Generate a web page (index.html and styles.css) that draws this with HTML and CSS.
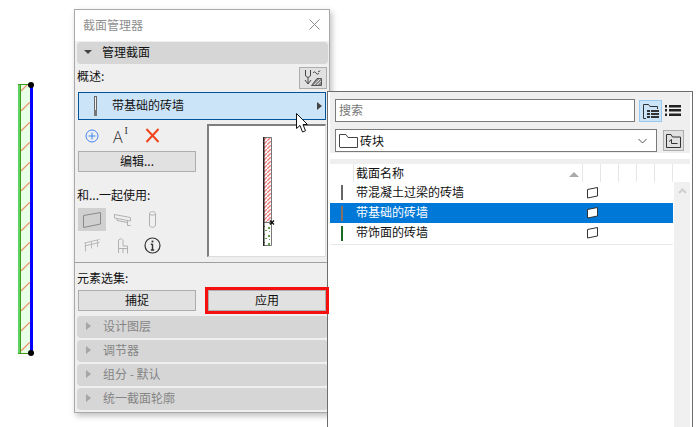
FILE: index.html
```html
<!DOCTYPE html>
<html lang="zh">

<head>
	<meta charset="utf-8">
	<title>截面管理器</title>
	<link rel="stylesheet" href="styles.css">
</head>

<body>
	<!-- wall on the drawing canvas -->
	<svg class="wall" width="20" height="274" viewBox="0 0 20 274">
		<defs>
			<pattern id="wallhatch" width="20" height="20" patternUnits="userSpaceOnUse">
				<path d="M5 9 L14 0" stroke="#ea9468" stroke-width="1.2"/>
			</pattern>
		</defs>
		<rect x="3" y="3" width="11" height="269" fill="#e8ffe8"/>
		<rect x="3" y="3" width="11" height="269" fill="url(#wallhatch)"/>
		<rect x="2" y="2" width="2" height="270" fill="#5fd35f"/>
		<rect x="4" y="2" width="1" height="270" fill="#3f9a1c"/>
		<rect x="2" y="2" width="12" height="1" fill="#3f9a1c"/>
		<rect x="2" y="271" width="12" height="1" fill="#3f9a1c"/>
		<rect x="14" y="2" width="3" height="270" fill="#0000ff"/>
		<circle cx="15" cy="3" r="3" fill="#000"/>
		<circle cx="15" cy="271" r="3" fill="#000"/>
	</svg>

	<div class="dialog">
		<div class="titlebar">
			<span>截面管理器</span>
			<svg width="11" height="11" viewBox="0 0 11 11" stroke="#8a8a8a" fill="none"><path d="M0.5 0.5 L10.5 10.5 M10.5 0.5 L0.5 10.5"/></svg>
		</div>
		<div class="dialog-body">
			<div class="section section-open"><span class="arrow-down"></span>管理截面</div>
			<div class="overview-row">
				<span>概述:</span>
				<button class="small-btn">
					<svg width="20" height="18" viewBox="0 0 20 18" fill="none" stroke="#444">
						<path d="M2.5 1 V6 C2.5 9 7.5 9 7.5 6 V1"/>
						<path d="M2 11 L5 15 L8 11"/>
						<path d="M5 8.5 V14"/>
						<path d="M10 4 C11 2.5 12 2.5 13 4 C14 5.5 15 5.5 16 4"/>
						<path d="M17 1.5 C16.500 3 16 3 15 2"/>
						<path d="M8.500 16.500 L14 9.500 H18.500 V16.500 Z" fill="#8a8a8a" stroke="#555"/>
						<path d="M11 16 L17 10 M14 16 L18 12" stroke="#d8d8d8"/>
					</svg>
				</button>
			</div>
			<div class="profile-picker">
				<svg class="picker-wall" width="4" height="20" viewBox="0 0 4 20">
					<rect x="0.5" y="0.5" width="2" height="19" fill="#eee" stroke="#666"/>
					<rect x="0" y="14" width="3" height="6" fill="#777"/>
				</svg>
				<span class="picker-name">带基础的砖墙</span>
				<span class="arrow-right"></span>
			</div>
			<div class="split">
				<div class="split-left">
					<div class="action-icons">
						<svg width="16" height="16" viewBox="0 0 16 16" fill="none" stroke="#3d85f0"><circle cx="8" cy="8" r="6"/><path d="M4.500 8 H11.500 M8 4.500 V11.500"/></svg>
						<span class="rename"><span class="rename-a">A</span><span class="rename-i">I</span></span>
						<svg width="15" height="15" viewBox="0 0 15 15" stroke="#f0431e" stroke-width="2"><path d="M1.500 1 L13.500 14 M13.500 1 L1.500 14"/></svg>
					</div>
					<button class="btn">编辑...</button>
					<div class="use-label">和...一起使用:</div>
					<div class="use-grid">
						<div class="use-item use-on">
							<svg width="20" height="18" viewBox="0 0 20 18" fill="none" stroke="#8a8a8a"><path d="M1.500 4.500 L18.500 1.500 V13 L1.500 16.500 Z"/></svg>
						</div>
						<div class="use-item">
							<svg width="17" height="12" viewBox="0 0 17 12" fill="none" stroke="#b0b0b0"><path d="M0.500 0.500 L16.500 3.500 V7 L0.500 4 Z M3 5 L3 6.500 L13.500 8.500 M13.500 7 V11.500 H16.500"/></svg>
						</div>
						<div class="use-item">
							<svg width="7" height="17" viewBox="0 0 7 17" fill="none" stroke="#b0b0b0"><path d="M0.500 2.500 C0.500 0 6.500 0 6.500 2.500 V14 C6.500 17 0.500 17 0.500 14 Z M0.500 3 C2 4.500 5 4.500 6.500 3"/></svg>
						</div>
						<div class="use-item">
							<svg width="16" height="13" viewBox="0 0 16 13" fill="none" stroke="#b8b8b8"><path d="M0.500 4 L15.500 0.500 M0.500 7 L15.500 3.500 M1.500 3.500 V12.500 M7.500 2.500 V9.500 M13.500 1 V8"/></svg>
						</div>
						<div class="use-item">
							<svg width="11" height="16" viewBox="0 0 11 16" fill="none" stroke="#b0b0b0"><path d="M1.500 15 V2 L4 0.500 L6 2.500 V8 H10.500 V15.500 M1.500 10.500 H10.500 M6 10.500 V15"/></svg>
						</div>
						<div class="use-item">
							<svg width="17" height="17" viewBox="0 0 17 17" fill="none" stroke="#333" stroke-width="1.2">
								<circle cx="8.500" cy="8.500" r="7.500"/>
								<path d="M8.500 7 V13 M6.800 7.200 H8.500 M6.800 13 H10.200" stroke-width="1.400"/>
								<rect x="7.600" y="3.600" width="1.800" height="1.800" fill="#333" stroke="none"/>
							</svg>
						</div>
					</div>
				</div>
				<div class="preview">
					<svg width="12" height="109" viewBox="0 0 12 109">
						<defs>
							<pattern id="brick" width="4" height="4" patternUnits="userSpaceOnUse">
								<rect width="4" height="4" fill="#fff"/>
								<path d="M0 4 L4 0" stroke="#ee7f7f" stroke-width="1.400"/>
							</pattern>
							<pattern id="gravel" width="8" height="8" patternUnits="userSpaceOnUse">
								<rect width="8" height="8" fill="#fff"/>
								<rect x="1" y="1" width="1" height="1" fill="#5da043"/>
								<rect x="5" y="2" width="2" height="2" fill="#5da043"/>
								<rect x="2" y="5" width="2" height="1" fill="#5da043"/>
								<rect x="6" y="6" width="1" height="1" fill="#7a9a7a"/>
							</pattern>
						</defs>
						<rect x="1" y="0.500" width="8" height="85" fill="url(#brick)"/>
						<rect x="1" y="85.500" width="8" height="23" fill="url(#gravel)"/>
						<path d="M1 0.500 H8.500 V108.500 H1 M1 85.500 H8.500" fill="none" stroke="#777"/>
						<rect x="0" y="0" width="1.500" height="109" fill="#222"/>
						<path d="M7 83.500 L11 87.500 M11 83.500 L7 87.500" stroke="#000" stroke-width="1.200"/>
					</svg>
				</div>
			</div>
			<div class="element-set">
				<div class="set-label">元素选集:</div>
				<div class="set-buttons">
					<button class="btn">捕捉</button>
					<span class="apply-ring"><button class="btn">应用</button></span>
				</div>
			</div>
			<div class="section"><span class="arrow-side"></span>设计图层</div>
			<div class="section"><span class="arrow-side"></span>调节器</div>
			<div class="section"><span class="arrow-side"></span>组分 - 默认</div>
			<div class="section"><span class="arrow-side"></span>统一截面轮廓</div>
		</div>
	</div>

	<div class="browser">
		<div class="toolbar">
			<div class="tool-row">
				<div class="search">搜索</div>
				<button class="toggle">
					<svg width="16" height="16" viewBox="0 0 16 16" fill="none" stroke="#333">
						<path d="M0.500 15.500 V1.500 H5.500 L7 3.500 H14.500 V6"/>
						<path d="M0.500 15.500 H3"/>
						<path d="M4 8 H16 M4 11 H16 M4 14 H16" stroke-width="2" stroke-dasharray="3 1 8"/>
					</svg>
				</button>
				<svg class="list-icon" width="16" height="11" viewBox="0 0 16 11" fill="#222">
					<rect x="0" y="0" width="2" height="2.500"/>
					<rect x="4" y="0" width="12" height="2.500"/>
					<rect x="0" y="4" width="2" height="2.500"/>
					<rect x="4" y="4" width="12" height="2.500"/>
					<rect x="0" y="8.500" width="2" height="2.500"/>
					<rect x="4" y="8.500" width="12" height="2.500"/>
				</svg>
			</div>
			<div class="tool-row">
				<div class="folder-select">
					<svg width="20" height="15" viewBox="0 0 20 15" fill="#fff" stroke="#444">
						<path d="M0.500 14 V1.500 H7 L9 4.500 H18.500 V14.500 H1 Z"/>
					</svg>
					<span class="folder-name">砖块</span>
					<svg class="chevron" width="9" height="6" viewBox="0 0 9 6" fill="none" stroke="#555">
						<path d="M0.500 1 L4.500 5 L8.500 1"/>
					</svg>
				</div>
				<button class="up-btn">
					<svg width="15" height="14" viewBox="0 0 15 14" fill="none" stroke="#333">
						<path d="M0.500 13.500 V0.500 H5 L6.500 3 H14.500 V13.500 Z"/>
						<path d="M3 7.500 L5.500 5.500 V9.500 H11.500"/>
					</svg>
				</button>
			</div>
		</div>
		<div class="band"></div>
		<div class="table-wrap">
			<div class="table">
				<div class="thead">
					<div class="th-blank"></div>
					<div class="th-name">截面名称<span class="sort"></span></div>
					<div class="th-col"></div>
					<div class="th-col"></div>
					<div class="th-col"></div>
					<div class="th-col"></div>
					<div class="th-col"></div>
				</div>
				<div class="trow">
					<span class="swatch swatch-grey"></span>
					<span class="trow-name">带混凝土过梁的砖墙</span>
					<svg width="13" height="12" viewBox="0 0 13 12" fill="#fff" stroke="#333"><path d="M1.500 2.500 L11.500 0.500 V9 L1.500 11 Z"/></svg>
				</div>
				<div class="trow trow-sel">
					<span class="swatch swatch-brown"></span>
					<span class="trow-name">带基础的砖墙</span>
					<svg width="13" height="12" viewBox="0 0 13 12" fill="#fff" stroke="#333"><path d="M1.500 2.500 L11.500 0.500 V9 L1.500 11 Z"/></svg>
				</div>
				<div class="trow trow-last">
					<span class="swatch swatch-green"></span>
					<span class="trow-name">带饰面的砖墙</span>
					<svg width="13" height="12" viewBox="0 0 13 12" fill="#fff" stroke="#333"><path d="M1.500 2.500 L11.500 0.500 V9 L1.500 11 Z"/></svg>
				</div>
			</div>
			<div class="scrollbar">
				<svg width="9" height="6" viewBox="0 0 9 6" fill="none" stroke="#cfcfcf" stroke-width="2"><path d="M1 5 L4.500 1.500 L8 5"/></svg>
			</div>
		</div>
	</div>

	<!-- mouse pointer, on top of everything -->
	<svg class="pointer" width="14" height="21" viewBox="0 0 14 21">
		<path d="M0.500 0.500 V15.500 L4 12.500 L6.500 19 L9.500 17.800 L7 11.500 H11.500 Z" fill="#fff" stroke="#111"/>
	</svg>
</body>

</html>
```

FILE: styles.css
```css
* {
	box-sizing: border-box;
}

body {
	margin: 0;
	width: 699px;
	height: 427px;
	overflow: hidden;
	position: relative;
	background-color: #fff;
	color: #111;
	font-family: "Noto Sans CJK SC", "Liberation Sans", sans-serif;
	font-size: 12px;
	line-height: 16px;
}

button {
	font: inherit;
	color: inherit;
	padding: 0;
}

.wall {
	position: absolute;
	left: 16px;
	top: 82px;
}

.pointer {
	position: absolute;
	left: 296px;
	top: 113px;
}

/* floating dialog */
.dialog {
	position: absolute;
	left: 74px;
	top: 9px;
	width: 256px;
	height: 404px;
	background-color: #efefef;
	border: 1px solid #a9a9a9;
	box-shadow: 2px 3px 6px rgba(0, 0, 0, 0.25);
	display: flex;
	flex-direction: column;
}

.titlebar {
	height: 31px;
	flex: none;
	background-color: #fff;
	color: #8f8f8f;
	display: flex;
	align-items: center;
	justify-content: space-between;
	padding: 0 9px 2px 8px;
}

.dialog-body {
	padding: 1px 1px 0 2px;
	display: flex;
	flex-direction: column;
}

.section {
	height: 22px;
	flex: none;
	margin-bottom: 2px;
	background-color: #d6d6d6;
	border-radius: 4px;
	color: #858585;
	display: flex;
	align-items: center;
	padding: 0 0 2px 9px;
}

.section-open {
	color: #111;
	padding-left: 7px;
}

.arrow-down {
	width: 0;
	height: 0;
	margin-right: 10px;
	border-left: 4px solid transparent;
	border-right: 4px solid transparent;
	border-top: 4px solid #444;
}

.arrow-side {
	width: 0;
	height: 0;
	margin-right: 12px;
	border-top: 4px solid transparent;
	border-bottom: 4px solid transparent;
	border-left: 5px solid #a5a5a5;
}

.overview-row {
	height: 23px;
	display: flex;
	align-items: flex-end;
	justify-content: space-between;
	padding-right: 1px;
}

.overview-row span {
	margin-bottom: 5px;
}

.small-btn {
	width: 28px;
	height: 22px;
	background-color: #e1e1e1;
	border: 1px solid #adadad;
	display: flex;
	align-items: center;
	justify-content: center;
}

.profile-picker {
	height: 28px;
	margin: 3px 0 0 1px;
	width: 248px;
	background-color: #cce4f7;
	border: 1px solid #005499;
	display: flex;
	align-items: center;
	padding-left: 15px;
}

.picker-name {
	margin: 0 0 2px 14px;
	flex: 1;
}

.arrow-right {
	width: 0;
	height: 0;
	margin-right: 3px;
	border-top: 4px solid transparent;
	border-bottom: 4px solid transparent;
	border-left: 5px solid #444;
}

.split {
	display: flex;
	justify-content: space-between;
	margin: 4px 0 0 -2px;
	width: 254px;
	height: 139px;
	border-bottom: 1px solid #a0a0a0;
	padding: 0 3px 0 3px;
}

.split-left {
	width: 118px;
}

.action-icons {
	height: 27px;
	display: flex;
	align-items: center;
	padding: 0 0 4px 6px;
}

.rename {
	margin-left: 13px;
	width: 32px;
	display: flex;
	align-items: flex-start;
	color: #333;
}

.rename-a {
	font-family: "Open Sans", sans-serif;
	font-weight: 300;
	font-size: 16px;
	line-height: 17px;
	padding-top: 3px;
}

.rename-i {
	font-family: "Liberation Serif", serif;
	font-size: 10px;
	line-height: 10px;
	margin-left: 2px;
}

.btn {
	height: 21px;
	width: 118px;
	background-color: #e1e1e1;
	border: 1px solid #adadad;
	display: block;
	text-align: center;
	padding-bottom: 2px;
}

.use-label {
	margin: 15px 0 0 -1px;
	height: 16px;
}

.use-grid {
	margin-top: 5px;
	display: grid;
	grid-template-columns: 28px 28px 28px;
	grid-auto-rows: 23px;
	gap: 3px 2px;
}

.use-item {
	display: flex;
	align-items: center;
	justify-content: center;
}

.use-on {
	background-color: #d0d0d0;
}

.preview {
	width: 119px;
	height: 133px;
	background-color: #fff;
	border-style: solid;
	border-width: 2px 1px 1px 2px;
	border-color: #7f7f7f #dcdcdc #dcdcdc #7f7f7f;
	display: flex;
	padding: 11px 0 0 54px;
}

.element-set {
	padding: 7px 0 0 0;
}

.set-label {
	height: 16px;
}

.set-buttons {
	margin: 4px 0 5px 1px;
	width: 248px;
	display: flex;
	justify-content: space-between;
}

/* the red mark sits above the browser panel as well */
.apply-ring {
	display: block;
	position: relative;
	z-index: 1;
	outline: 3px solid #f51010;
	width: 118px;
}

/* profile browser next to the dialog */
.browser {
	position: absolute;
	left: 327px;
	top: 91px;
	width: 366px;
	height: 340px;
	background-color: #fff;
	border: 1px solid #6d6d6d;
	padding: 0 2px;
}

.toolbar {
	height: 61px;
	background-color: #efefef;
	padding: 7px 5px 0 5px;
}

.tool-row {
	display: flex;
	align-items: center;
	margin-bottom: 7px;
}

.search {
	width: 300px;
	height: 23px;
	background-color: #fff;
	border: 1px solid #7a7a7a;
	color: #777;
	padding: 2px 3px;
}

.toggle {
	width: 23px;
	height: 22px;
	margin-left: 4px;
	background-color: #cce4f7;
	border: 1px solid #99c9ef;
	display: flex;
	align-items: center;
	justify-content: center;
}

.list-icon {
	margin-left: 3px;
}

.folder-select {
	width: 322px;
	height: 23px;
	background-color: #fff;
	border: 1px solid #7a7a7a;
	display: flex;
	align-items: center;
	padding: 0 9px 0 3px;
}

.folder-name {
	margin-left: 1px;
	flex: 1;
}

.up-btn {
	width: 21px;
	height: 21px;
	margin-left: 6px;
	background-color: #e1e1e1;
	border: 1px solid #adadad;
	display: flex;
	align-items: center;
	justify-content: center;
}

.band {
	height: 5px;
	margin-top: 6px;
	background-color: #efefef;
}

.table-wrap {
	display: flex;
}

.table {
	width: 343px;
}

.thead {
	height: 18px;
	display: flex;
}

.th-blank {
	width: 24px;
	border-right: 1px solid #e6e6e6;
}

.th-name {
	width: 230px;
	padding: 1px 0 0 2px;
	position: relative;
	border-right: 1px solid #e6e6e6;
}

.sort {
	position: absolute;
	right: 3px;
	top: 8px;
	width: 0;
	height: 0;
	border-left: 5px solid transparent;
	border-right: 5px solid transparent;
	border-bottom: 5px solid #aaa;
}

.th-col {
	width: 18px;
	border-right: 1px solid #e6e6e6;
}

.trow {
	height: 21px;
	display: flex;
	align-items: center;
}

.trow-sel {
	height: 20px;
	background-color: #0078d7;
	color: #fff;
}

.trow-last {
	height: 22px;
	border-bottom: 1px solid #e8e8e8;
	padding-bottom: 1px;
}

.swatch {
	width: 2px;
	height: 15px;
	margin-left: 11px;
}

.swatch-grey {
	background-color: #666;
}

.swatch-brown {
	background-color: #8a6f5f;
}

.swatch-green {
	background-color: #1c6b24;
}

.trow-name {
	margin: 0 0 2px 13px;
	width: 230px;
}

.scrollbar {
	width: 17px;
	margin: 18px 0 0 1px;
	height: 260px;
	background-color: #f0f0f0;
	display: flex;
	justify-content: center;
	padding-top: 6px;
	align-items: flex-start;
}
```
